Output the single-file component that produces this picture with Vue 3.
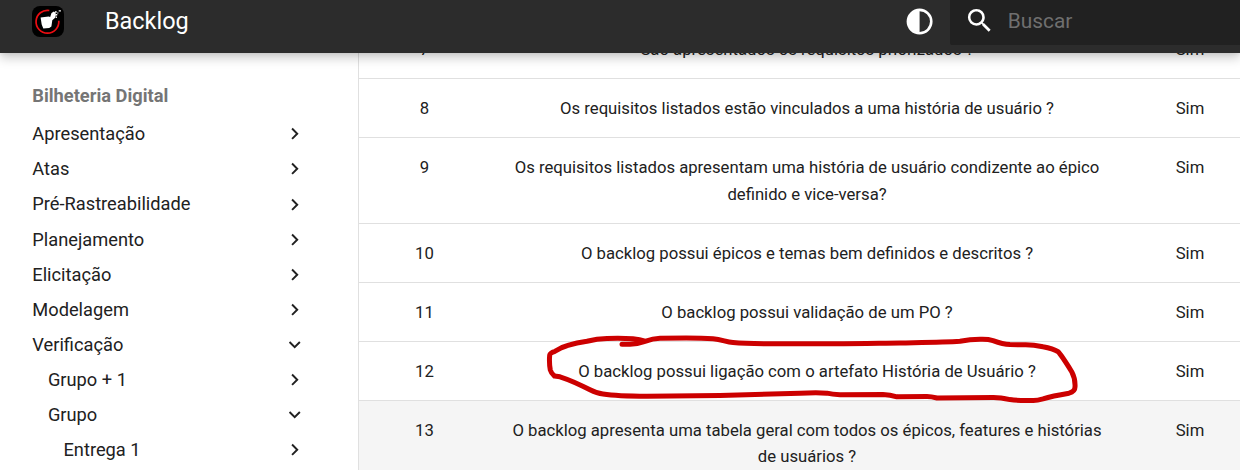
<script setup>
const nav = [
  { label: 'Apresentação', level: 0 },
  { label: 'Atas', level: 0 },
  { label: 'Pré-Rastreabilidade', level: 0 },
  { label: 'Planejamento', level: 0 },
  { label: 'Elicitação', level: 0 },
  { label: 'Modelagem', level: 0 },
  { label: 'Verificação', level: 0, open: true },
  { label: 'Grupo + 1', level: 1 },
  { label: 'Grupo', level: 1, open: true },
  { label: 'Entrega 1', level: 2 },
]

const rows = [
  { id: 7, lines: ['São apresentados os requisitos priorizados ?'] },
  { id: 8, lines: ['Os requisitos listados estão vinculados a uma história de usuário ?'] },
  { id: 9, lines: ['Os requisitos listados apresentam uma história de usuário condizente ao épico', 'definido e vice-versa?'] },
  { id: 10, lines: ['O backlog possui épicos e temas bem definidos e descritos ?'] },
  { id: 11, lines: ['O backlog possui validação de um PO ?'] },
  { id: 12, lines: ['O backlog possui ligação com o artefato História de Usuário ?'] },
  { id: 13, lines: ['O backlog apresenta uma tabela geral com todos os épicos, features e histórias', 'de usuários ?'], active: true },
]
</script>

<template>
  <div class="page">
    <header class="header">
      <svg class="logo" viewBox="0 0 32 32">
        <rect width="32" height="31" rx="8" fill="#000" />
        <path d="M17.3 4.5A11.4 11.4 0 1 0 26.8 14.8" fill="none" stroke="#ee0d12" stroke-width="1.7" />
        <path d="M8.6 11.4l8-.9 1.6.6 1.3-4.2 2.4-1.4 1.6 1.2.4 2.4-1 3-2.6 2.2-.9 6.3-2.2 1.5-5.9.3-1.6-4z" fill="#fff" />
        <path d="M23 5.2h1.7v1.5H23zM23.6 8h1.7v1.6h-1.7zM25.2 6.4h1.2v1.2h-1.2zM23.6 10.6h1.3v1.3h-1.3zM26.7 4.2h2.2v1.2h-2.2z" fill="#fff" />
      </svg>
      <span class="title">Backlog</span>
      <svg class="contrast" viewBox="0 0 24 24"><path d="M12 2A10 10 0 0 0 2 12a10 10 0 0 0 10 10 10 10 0 0 0 10-10A10 10 0 0 0 12 2m0 2a8 8 0 0 1 8 8 8 8 0 0 1-8 8V4Z" /></svg>
      <div class="search">
        <svg viewBox="0 0 24 24"><path d="M9.5 3A6.5 6.5 0 0 1 16 9.5c0 1.61-.59 3.09-1.56 4.23l.27.27h.79l5 5-1.5 1.5-5-5v-.79l-.27-.27A6.516 6.516 0 0 1 9.5 16 6.5 6.5 0 0 1 3 9.5 6.5 6.5 0 0 1 9.5 3m0 2C7 5 5 7 5 9.5S7 14 9.5 14 14 12 14 9.5 12 5 9.5 5Z" /></svg>
        <span>Buscar</span>
      </div>
    </header>

    <div class="body">
      <nav class="sidebar">
        <div class="site">Bilheteria Digital</div>
        <div v-for="item in nav" :key="item.label" class="item" :class="'level-' + item.level">
          <span>{{ item.label }}</span>
          <svg viewBox="0 0 24 24" :class="{ open: item.open }"><path d="M8.59 16.58 13.17 12 8.59 7.41 10 6l6 6-6 6-1.41-1.42Z" /></svg>
        </div>
      </nav>

      <main class="table">
        <div v-for="row in rows" :key="row.id" class="row" :class="{ active: row.active }">
          <div>{{ row.id }}</div>
          <div><div v-for="line in row.lines" :key="line">{{ line }}</div></div>
          <div>Sim</div>
        </div>
      </main>
    </div>

    <svg class="marker" viewBox="0 0 1240 470">
      <path d="M622 344.3L630 344.3Q638 343.8 645 341.3Q653 338.5 660 338.3C680 337.8 700 337.7 713 338.7C722 339.5 726 342 733 342.6C745 343.6 755 343.6 770 343.7C810 344.3 870 343.3 900 343C925 342.5 945 342.3 960 341.3Q970 339.5 980 339.3Q988 339 993 340.6Q1003 344.3 1010 344.6L1025 344.7Q1033 344.6 1043 346.8Q1053 348.5 1058 351.7Q1061 354.5 1071.7 371.7Q1075.5 379 1075 387Q1075 391.5 1069 393.2Q1052 396 1043 398.8Q1037 400.5 1033 400.4Q1018 400.7 1010 399.6Q1000 397.3 993 397.4L937 398Q931 396.5 927 396.5L897 396.8Q890 394.6 883 394.4L840 394.7Q832 394.5 827 393.2Q818 392.5 800 393.2L720 395.4L647 396.2Q617 396.2 603 394Q597 393.5 590 389.8Q573 381 560 376.8L554.5 376Q551 373 550.3 370Q549 363 549.7 355Q550 352.8 555 351.3Q561 347 567 345.7Q577 342.5 587 341.2Q597 338.7 607 338.4Q623 338 633 338.7Q640 339.3 645 341" />
    </svg>
  </div>
</template>

<style>
body {
  margin: 0;
  overflow: hidden;
}
</style>

<style scoped>
.page {
  position: relative;
  width: 1240px;
  height: 470px;
  overflow: hidden;
  background: #fff;
  color: #212121;
  font-family: Roboto, "Liberation Sans", sans-serif;
}
.header {
  position: relative;
  z-index: 1;
  display: flex;
  align-items: center;
  box-sizing: border-box;
  height: 53px;
  padding: 0 0 10px 32px;
  background: #2c2c2c;
  color: #fff;
  box-shadow: 0 0 5.2px rgba(0, 0, 0, 0.1), 0 5.2px 10.4px rgba(0, 0, 0, 0.2);
}
.logo {
  width: 32px;
  height: 32px;
}
.title {
  margin: 0 0 2px 41px;
  font-size: 23.45px;
  line-height: 42px;
}
.contrast {
  width: 31.2px;
  height: 31.2px;
  margin-left: auto;
  fill: currentColor;
}
.search {
  display: flex;
  align-items: center;
  box-sizing: border-box;
  width: 290px;
  height: 45px;
  margin: 2px 0 0 15px;
  padding: 0 0 3px 14px;
  border-radius: 0 0 0 2.6px;
  background: #212121;
}
.search svg {
  width: 31.2px;
  height: 31.2px;
  fill: #fff;
}
.search span {
  margin-left: 12.5px;
  color: #6f6f6f;
  font-size: 20.9px;
}
.body {
  display: flex;
}
.sidebar {
  flex: none;
  box-sizing: border-box;
  width: 358px;
  height: 417px;
  padding: 31px 52px 0 32.3px;
  font-size: 18.25px;
  line-height: 23.66px;
}
.site {
  margin-bottom: 14.53px;
  color: #757575;
  font-weight: 700;
}
.item {
  display: flex;
  justify-content: space-between;
  align-items: center;
  height: 23.66px;
  margin-bottom: 11.48px;
}
.level-1 {
  padding-left: 15.6px;
}
.level-2 {
  padding-left: 31.2px;
}
.item svg {
  width: 23.4px;
  height: 23.4px;
  fill: #212121;
}
.item svg.open {
  transform: rotate(90deg);
}
.table {
  width: 897px;
  height: 451px;
  margin-top: -34px;
  flex: none;
  border-left: 1px solid #e0e0e0;
  font-size: 16.71px;
  line-height: 26.7px;
  text-align: center;
}
.row {
  display: grid;
  grid-template-columns: 131px 634px 132px;
  box-sizing: border-box;
  padding: 17px 0 14.3px;
  border-top: 1px solid #e0e0e0;
  white-space: nowrap;
}
.row.active {
  background: #f5f5f5;
}
.marker {
  position: absolute;
  inset: 0;
  width: 1240px;
  height: 470px;
  pointer-events: none;
}
.marker path {
  fill: none;
  stroke: #cc0000;
  stroke-width: 5;
  stroke-linecap: round;
  stroke-linejoin: round;
}
</style>
